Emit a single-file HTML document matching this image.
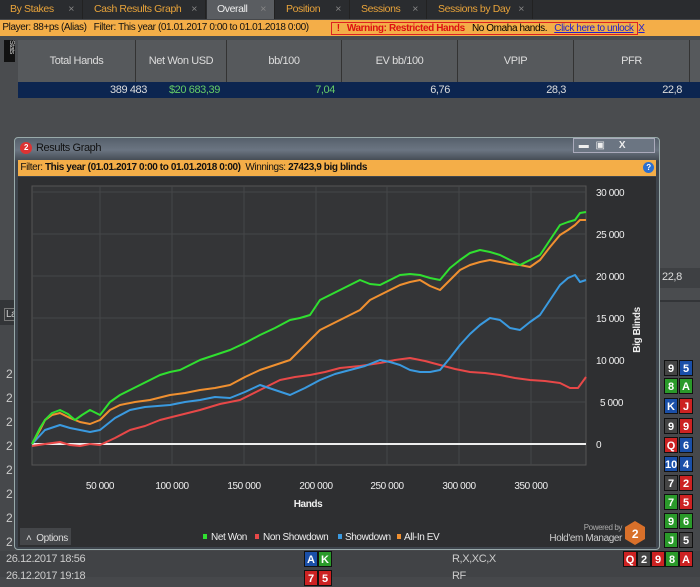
<!DOCTYPE html><html><head><style>
body{margin:0;width:700px;height:577px;overflow:hidden;background:#46484b;font-family:"Liberation Sans",sans-serif;font-size:11px;position:relative;letter-spacing:-0.4px}
.a{position:absolute}
.tab{position:absolute;top:0;height:19px;line-height:19px;color:#e8a33a;font-size:10.5px;padding-left:10px;box-sizing:border-box;border-right:1px solid #222}
.tab i{font-style:normal;color:#888;position:absolute;right:8px}
.hc{position:absolute;top:40px;height:42px;line-height:42px;color:#ddd;font-size:11px;border-right:1px solid #333;text-align:center}
.card{position:absolute;width:14px;height:16px;color:#fff;font-weight:bold;font-size:11px;text-align:center;line-height:16px;border:1px solid #111;box-sizing:border-box;letter-spacing:0}
</style></head><body>
<div class="a" style="left:0;top:0;width:700px;height:19px;background:#2a2c2f"></div>
<div class="tab" style="left:0;width:83px">By Stakes<i>×</i></div>
<div class="tab" style="left:84px;width:122px">Cash Results Graph<i>×</i></div>
<div class="tab" style="left:207px;width:68px;background:#5a5d61;color:#eee">Overall<i>×</i></div>
<div class="tab" style="left:276px;width:74px">Position<i>×</i></div>
<div class="tab" style="left:351px;width:76px">Sessions<i>×</i></div>
<div class="tab" style="left:428px;width:105px">Sessions by Day<i>×</i></div>
<div class="a" style="left:0;top:20px;width:700px;height:16px;background:#f4ae48;font-size:10px;line-height:16px;color:#111;white-space:nowrap">&nbsp;Player: 88+ps (Alias)&nbsp;&nbsp; Filter: <b style="font-weight:normal">This year (01.01.2017 0:00 to 01.01.2018 0:00)</b></div>
<div class="a" style="left:331px;top:22px;width:307px;height:13px;border:1px solid #d22;font-size:10px;line-height:12px;box-sizing:border-box;white-space:nowrap;background:#f4ae48"><span style="color:#d11;font-weight:bold">&nbsp;&nbsp;!&nbsp;&nbsp; Warning: Restricted Hands</span>&nbsp;&nbsp; No Omaha hands.&nbsp;&nbsp; <u style="color:#22c">Click here to unlock</u>&nbsp; <u style="color:#22c">X</u></div>
<div class="a" style="left:0;top:36px;width:700px;height:264px;background:#4a4c4f"></div>
<div class="a" style="left:4px;top:40px;width:11px;height:22px;background:#111;color:#ccc;font-size:7px;writing-mode:vertical-rl">Stats</div>
<div class="a" style="left:18px;top:40px;width:682px;height:42px;background:#56595c"></div>
<div class="hc" style="left:18px;width:117px">Total Hands</div>
<div class="hc" style="left:136px;width:90px">Net Won USD</div>
<div class="hc" style="left:227px;width:114px">bb/100</div>
<div class="hc" style="left:342px;width:115px">EV bb/100</div>
<div class="hc" style="left:458px;width:115px">VPIP</div>
<div class="hc" style="left:574px;width:115px">PFR</div>
<div class="a" style="left:18px;top:82px;width:682px;height:16px;background:#0c2550;color:#ddd;font-size:11px;line-height:16px">
<span class="a" style="right:553px">389 483</span><span class="a" style="right:480px;color:#6c6">$20 683,39</span><span class="a" style="right:365px;color:#6c6">7,04</span><span class="a" style="right:250px">6,76</span><span class="a" style="right:134px">28,3</span><span class="a" style="right:18px">22,8</span></div>
<div class="a" style="left:660px;top:268px;width:40px;height:20px;background:#3e4043"></div>
<div class="a" style="left:662px;top:271px;color:#ddd">22,8</div>
<div class="a" style="left:0;top:300px;width:18px;height:25px;background:#333538"></div>
<div class="a" style="left:660px;top:300px;width:40px;height:2px;background:#333538"></div>
<div class="a" style="left:4px;top:308px;color:#ccc;font-size:10px;border:1px solid #777;padding:0 1px">La</div>
<div class="a" style="left:6px;top:362px;color:#ccc;line-height:24px;font-size:12px">2<br>2<br>2<br>2<br>2<br>2<br>2<br>2</div>
<div class="a" style="left:0;top:551px;width:700px;height:26px;background:#414346"></div>
<div class="a" style="left:0;top:553px;width:700px;color:#ccc;font-size:11px">
<div class="a" style="left:6px;top:0">26.12.2017 18:56</div><div class="a" style="left:452px;top:0">R,X,XC,X</div>
<div class="a" style="left:6px;top:17px">26.12.2017 19:18</div><div class="a" style="left:452px;top:17px">RF</div></div>
<div class="card" style="left:304px;top:551px;background:#1a4fa8">A</div><div class="card" style="left:318px;top:551px;background:#2a9a2a">K</div>
<div class="card" style="left:304px;top:570px;background:#c22">7</div><div class="card" style="left:318px;top:570px;background:#c22">5</div>
<div class="card" style="left:623px;top:551px;background:#c22">Q</div><div class="card" style="left:637px;top:551px;background:#444">2</div><div class="card" style="left:651px;top:551px;background:#c22">9</div><div class="card" style="left:665px;top:551px;background:#2a9a2a">8</div><div class="card" style="left:679px;top:551px;background:#c22">A</div>
<div class="a" style="left:664px;top:360px">
<div class="card" style="left:0;top:0;background:#444">9</div><div class="card" style="left:15px;top:0;background:#1a4fa8">5</div>
<div class="card" style="left:0;top:18px;background:#2a9a2a">8</div><div class="card" style="left:15px;top:18px;background:#2a9a2a">A</div>
<div class="card" style="left:0;top:38px;background:#1a4fa8">K</div><div class="card" style="left:15px;top:38px;background:#c22">J</div>
<div class="card" style="left:0;top:58px;background:#444">9</div><div class="card" style="left:15px;top:58px;background:#c22">9</div>
<div class="card" style="left:0;top:77px;background:#c22">Q</div><div class="card" style="left:15px;top:77px;background:#1a4fa8">6</div>
<div class="card" style="left:0;top:96px;background:#1a4fa8">10</div><div class="card" style="left:15px;top:96px;background:#1a4fa8">4</div>
<div class="card" style="left:0;top:115px;background:#444">7</div><div class="card" style="left:15px;top:115px;background:#c22">2</div>
<div class="card" style="left:0;top:134px;background:#2a9a2a">7</div><div class="card" style="left:15px;top:134px;background:#c22">5</div>
<div class="card" style="left:0;top:153px;background:#2a9a2a">9</div><div class="card" style="left:15px;top:153px;background:#2a9a2a">6</div>
<div class="card" style="left:0;top:172px;background:#2a9a2a">J</div><div class="card" style="left:15px;top:172px;background:#444">5</div>
</div>
<!-- window -->
<div class="a" style="left:14px;top:137px;width:646px;height:413px;background:linear-gradient(#56606b,#6b7582 12px,#3e454d 24px,#3e454d);border:1px solid #9aa;box-sizing:border-box;border-radius:4px"></div>
<div class="a" style="left:20px;top:142px;width:12px;height:12px;border-radius:6px;background:#d33;color:#fff;font-size:8px;text-align:center;line-height:12px;font-weight:bold">2</div>
<div class="a" style="left:36px;top:142px;color:#111;font-size:11px">Results Graph</div>
<div class="a" style="left:573px;top:138px;width:82px;height:15px;background:#6b7582;border:1px solid #aab;box-sizing:border-box;font-size:10px;color:#eee;line-height:13px">&nbsp;&nbsp;▬&nbsp;&nbsp;&nbsp;▣&nbsp;&nbsp;&nbsp;&nbsp;&nbsp;&nbsp;<b>X</b></div>
<div class="a" style="left:18px;top:160px;width:638px;height:16px;background:#f4ae48;font-size:10px;line-height:16px;color:#111;white-space:nowrap">&nbsp;Filter: <b>This year (01.01.2017 0:00 to 01.01.2018 0:00)</b>&nbsp; Winnings: <b>27423,9 big blinds</b></div>
<div class="a" style="left:643px;top:162px;width:11px;height:11px;border-radius:6px;background:#2a6fd0;color:#fff;font-size:8px;text-align:center;line-height:11px;font-weight:bold">?</div>
<div class="a" style="left:18px;top:177px;width:638px;height:370px;background:#2e2f31"></div>
<svg class="a" style="left:0;top:0;letter-spacing:-0.4px" width="700" height="577">
<rect x="32" y="186" width="554" height="279" fill="#343537" stroke="#555"/>
<g stroke="#454648" stroke-width="1">
<line x1="32" y1="192" x2="586" y2="192"/><line x1="32" y1="234" x2="586" y2="234"/><line x1="32" y1="276" x2="586" y2="276"/><line x1="32" y1="318" x2="586" y2="318"/><line x1="32" y1="360" x2="586" y2="360"/><line x1="32" y1="402" x2="586" y2="402"/>
<line x1="100" y1="186" x2="100" y2="465"/><line x1="172" y1="186" x2="172" y2="465"/><line x1="244" y1="186" x2="244" y2="465"/><line x1="316" y1="186" x2="316" y2="465"/><line x1="387" y1="186" x2="387" y2="465"/><line x1="459" y1="186" x2="459" y2="465"/><line x1="531" y1="186" x2="531" y2="465"/>
</g>
<line x1="32" y1="444" x2="586" y2="444" stroke="#eee" stroke-width="2"/>
<g fill="none" stroke-width="2" stroke-linejoin="round">
<polyline stroke="#e84848" points="32,446 45,444 60,442 70,445 80,446 90,444 100,445 115,438 130,430 145,426 160,420 180,415 200,410 220,404 240,400 260,390 280,380 295,377 310,375 325,372 340,368 360,366 380,363 395,360 410,358 425,361 440,365 455,369 470,372 485,373 500,375 515,378 530,380 545,381 560,383 570,388 578,388 586,377"/>
<polyline stroke="#3a9ae0" points="32,444 45,430 60,425 70,428 80,430 90,432 100,430 115,418 130,410 145,407 170,405 185,402 200,400 215,397 230,398 245,392 260,385 275,390 290,395 305,388 320,380 335,374 350,370 365,366 380,360 390,362 400,365 410,370 420,372 430,372 440,370 450,358 460,345 470,334 480,325 490,318 500,320 510,328 520,330 530,322 540,315 550,300 560,285 568,278 575,275 580,282 586,280"/>
<polyline stroke="#f09030" points="32,444 40,430 45,420 52,415 60,413 70,418 80,422 90,424 100,420 110,410 120,405 135,402 150,400 170,395 185,393 200,390 215,388 230,385 245,377 260,370 275,365 290,360 305,345 320,330 330,325 340,320 350,315 360,310 370,300 380,295 390,290 400,285 410,282 420,280 430,286 440,290 450,280 460,270 470,265 480,262 490,260 500,262 510,264 520,265 530,267 540,260 550,247 560,235 568,230 575,225 580,220 586,220"/>
<polyline stroke="#30e030" points="32,444 40,428 45,420 52,413 60,410 68,414 75,420 82,415 90,410 100,415 110,402 120,395 130,390 140,385 150,380 160,375 170,372 180,370 190,365 200,360 215,355 230,350 245,343 260,335 275,328 290,320 300,318 310,315 320,300 330,295 340,290 350,285 360,280 370,284 380,285 390,280 400,275 410,274 420,275 430,278 440,280 450,268 460,260 470,253 480,250 490,252 500,255 510,260 520,265 530,260 540,255 550,240 560,225 568,222 575,220 580,213 586,212"/>
</g>
<g fill="#eee" font-size="10" font-family="Liberation Sans">
<text x="596" y="196">30 000</text><text x="596" y="238">25 000</text><text x="596" y="280">20 000</text><text x="596" y="322">15 000</text><text x="596" y="364">10 000</text><text x="600" y="406">5 000</text><text x="596" y="448">0</text>
<g text-anchor="middle"><text x="100" y="489">50 000</text><text x="172" y="489">100 000</text><text x="244" y="489">150 000</text><text x="316" y="489">200 000</text><text x="387" y="489">250 000</text><text x="459" y="489">300 000</text><text x="531" y="489">350 000</text>
<text x="308" y="507" font-weight="bold">Hands</text></g>
<text transform="translate(640,330) rotate(-90)" text-anchor="middle" font-weight="bold">Big Blinds</text>
<rect x="203" y="534" width="4" height="5" fill="#30e030"/><text x="211" y="540">Net Won</text>
<rect x="255" y="534" width="4" height="5" fill="#e84848"/><text x="263" y="540">Non Showdown</text>
<rect x="338" y="534" width="4" height="5" fill="#3a9ae0"/><text x="345" y="540">Showdown</text>
<rect x="397" y="534" width="4" height="5" fill="#f09030"/><text x="404" y="540">All-In EV</text>
<text x="622" y="530" font-size="8" fill="#aaa" text-anchor="end">Powered by</text>
<text x="622" y="541" fill="#ccc" text-anchor="end">Hold'em Manager</text>
</g>
<polygon points="635,521 645,527 645,539 635,545 625,539 625,527" fill="#d8702a"/>
<text x="635" y="538" fill="#fff" font-size="12" font-weight="bold" text-anchor="middle" font-family="Liberation Sans">2</text>
<rect x="20" y="528" width="51" height="17" fill="#444649"/>
<text x="26" y="541" fill="#ddd" font-size="10" font-family="Liberation Sans">˄&nbsp; Options</text>
</svg>
</body></html>
